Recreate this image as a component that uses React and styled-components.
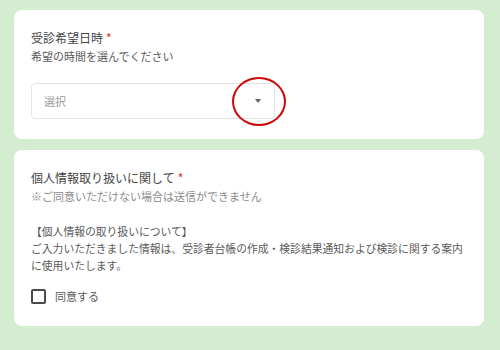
import styled, { createGlobalStyle } from "styled-components"

const GlobalStyle = createGlobalStyle`
body{
    margin: 0;
    background: #d4edd0;
    font-family: "Noto Sans CJK JP", "Noto Sans", sans-serif;
}
`;

const Page = styled.div`
width: 500px;
height: 350px;
box-sizing: border-box;
padding: 10px 16px 0 14px;
display: flex;
flex-direction: column;
gap: 11px;
`;

const Card = styled.section`
background: #fff;
border-radius: 8px;
padding: ${(p) => p.$pad};
display: flex;
flex-direction: column;
`;

const Title = styled.div`
font-size: 12px;
line-height: 17px;
color: #444;
.req{
    color: #d93025;
    margin-left: 3px;
}
`;

const Note = styled.div`
font-size: 11px;
line-height: 17px;
color: ${(p) => p.$light ? "#8c8c8c" : "#5a5a5a"};
margin-top: ${(p) => p.$mt || 0}px;
`;

const Body = styled.p`
margin: 18px 0 0;
font-size: 10.8px;
line-height: 17px;
color: #5a5a5a;
`;

const Select = styled.div`
position: relative;
width: 244px;
height: 36px;
box-sizing: border-box;
margin-top: 18px;
border: 1px solid #e3e3e3;
border-radius: 4px;
display: flex;
align-items: center;
justify-content: space-between;
padding: 0 12px;
font-size: 11px;
color: #9a9a9a;
`;

const Caret = styled.span`
width: 0;
height: 0;
border-left: 3.5px solid transparent;
border-right: 3.5px solid transparent;
border-top: 4px solid #5f6368;
margin-right: 1px;
`;

const Mark = styled.span`
position: absolute;
left: 200px;
top: -7px;
width: 50px;
height: 45px;
border: 2px solid #cc0a0a;
border-radius: 50%;
`;

const Check = styled.label`
display: flex;
align-items: center;
gap: 9px;
margin-top: 14px;
font-size: 11px;
color: #5a5a5a;
`;

const Box = styled.span`
width: 11px;
height: 11px;
border: 2px solid #4a4a4a;
border-radius: 2px;
`;

export default function App() {
    return (
        <Page>
            <GlobalStyle />
            <Card $pad="19px 17px 20px">
                <Title>受診希望日時<span className="req">*</span></Title>
                <Note $mt={2}>希望の時間を選んでください</Note>
                <Select>
                    選択
                    <Caret />
                    <Mark />
                </Select>
            </Card>
            <Card $pad="19px 17px 22px">
                <Title>個人情報取り扱いに関して<span className="req">*</span></Title>
                <Note $light $mt={2}>※ご同意いただけない場合は送信ができません</Note>
                <Body>
                    【個人情報の取り扱いについて】<br />
                    ご入力いただきました情報は、受診者台帳の作成・検診結果通知および検診に関する案内に使用いたします。
                </Body>
                <Check>
                    <Box />
                    同意する
                </Check>
            </Card>
        </Page>
    )
}
